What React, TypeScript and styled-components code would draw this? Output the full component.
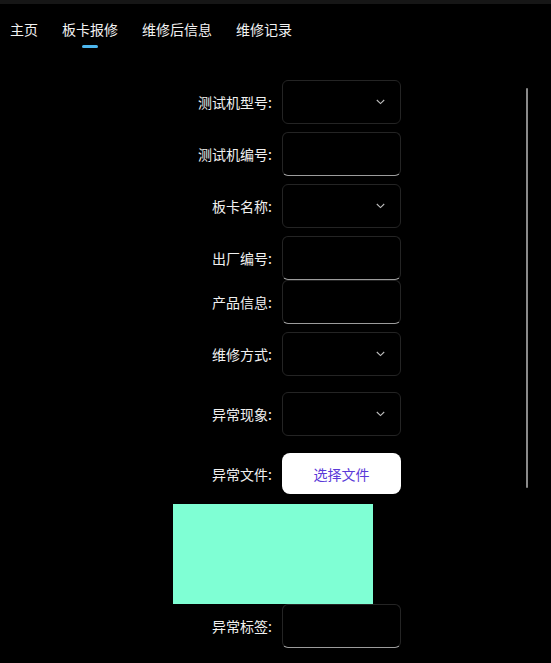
import React from "react";
import styled, { createGlobalStyle } from "styled-components";

const Global = createGlobalStyle`
  html, body { margin: 0; padding: 0; background: #000; }
  body { font-family: "Noto Sans CJK SC", "Noto Sans", sans-serif; color: #f0f0f0; }
`;

const Page = styled.div`
  position: relative;
  width: 551px;
  height: 663px;
  overflow: hidden;
  background: #000;
`;

const TopBar = styled.div`
  height: 4px;
  background: #161616;
`;

const Tabs = styled.nav`
  display: flex;
  gap: 24px;
  padding: 0 0 0 10px;
  height: 44px;
`;

const Tab = styled.div<{ $active?: boolean }>`
  position: relative;
  font-size: 14px;
  line-height: 20px;
  padding-top: 15px;
  color: #f2f2f2;
  &::after {
    content: "";
    display: ${(p) => (p.$active ? "block" : "none")};
    position: absolute;
    left: 50%;
    top: 41px;
    width: 16px;
    height: 3px;
    margin-left: -8px;
    border-radius: 2px;
    background: #4db6ee;
  }
`;

const Form = styled.div`
  display: flex;
  flex-direction: column;
  padding: 32px 0 0 173px;
`;

const Row = styled.div<{ $mb: number }>`
  display: grid;
  grid-template-columns: 99px 119px;
  column-gap: 10px;
  align-items: center;
  margin-bottom: ${(p) => p.$mb}px;
`;

const Label = styled.label`
  text-align: right;
  font-size: 14px;
  line-height: 20px;
  color: #f0f0f0;
  white-space: nowrap;
`;

const SelectBox = styled.div`
  box-sizing: border-box;
  height: 44px;
  border: 1px solid #242424;
  border-radius: 6px;
  display: flex;
  align-items: center;
  justify-content: flex-end;
  padding-right: 15px;
`;

const InputBox = styled.div`
  box-sizing: border-box;
  height: 44px;
  border: 1px solid #242424;
  border-bottom-color: #9c9c9c;
  border-radius: 6px;
`;

const FileButton = styled.button`
  box-sizing: border-box;
  height: 41px;
  width: 119px;
  border: none;
  border-radius: 8px;
  background: #fff;
  color: #5b3ad8;
  font-family: "Noto Sans CJK SC", "Noto Sans", sans-serif;
  font-size: 14px;
  padding: 0;
`;

const Preview = styled.div`
  width: 200px;
  height: 100px;
  background: #7fffd4;
`;

const ScrollThumb = styled.div`
  position: absolute;
  left: 526px;
  top: 88px;
  width: 2px;
  height: 400px;
  border-radius: 1px;
  background: #8a8a8a;
`;

const Chevron = () => (
  <svg width="9" height="6" viewBox="0 0 9 6" fill="none">
    <path d="M0.8 1 L4.5 4.6 L8.2 1" stroke="#bdbdbd" strokeWidth="1.1" />
  </svg>
);

type Field = { label: string; kind: "select" | "input"; mb: number };

const fields: Field[] = [
  { label: "测试机型号:", kind: "select", mb: 8 },
  { label: "测试机编号:", kind: "input", mb: 8 },
  { label: "板卡名称:", kind: "select", mb: 8 },
  { label: "出厂编号:", kind: "input", mb: 0 },
  { label: "产品信息:", kind: "input", mb: 8 },
  { label: "维修方式:", kind: "select", mb: 16 },
  { label: "异常现象:", kind: "select", mb: 17 },
];

export default function App() {
  return (
    <Page>
      <Global />
      <TopBar />
      <Tabs>
        <Tab>主页</Tab>
        <Tab $active>板卡报修</Tab>
        <Tab>维修后信息</Tab>
        <Tab>维修记录</Tab>
      </Tabs>
      <Form>
        {fields.map((f) => (
          <Row key={f.label} $mb={f.mb}>
            <Label>{f.label}</Label>
            {f.kind === "select" ? (
              <SelectBox>
                <Chevron />
              </SelectBox>
            ) : (
              <InputBox />
            )}
          </Row>
        ))}
        <Row $mb={10}>
          <Label>异常文件:</Label>
          <FileButton>选择文件</FileButton>
        </Row>
        <Preview />
        <Row $mb={0}>
          <Label>异常标签:</Label>
          <InputBox />
        </Row>
      </Form>
      <ScrollThumb />
    </Page>
  );
}
